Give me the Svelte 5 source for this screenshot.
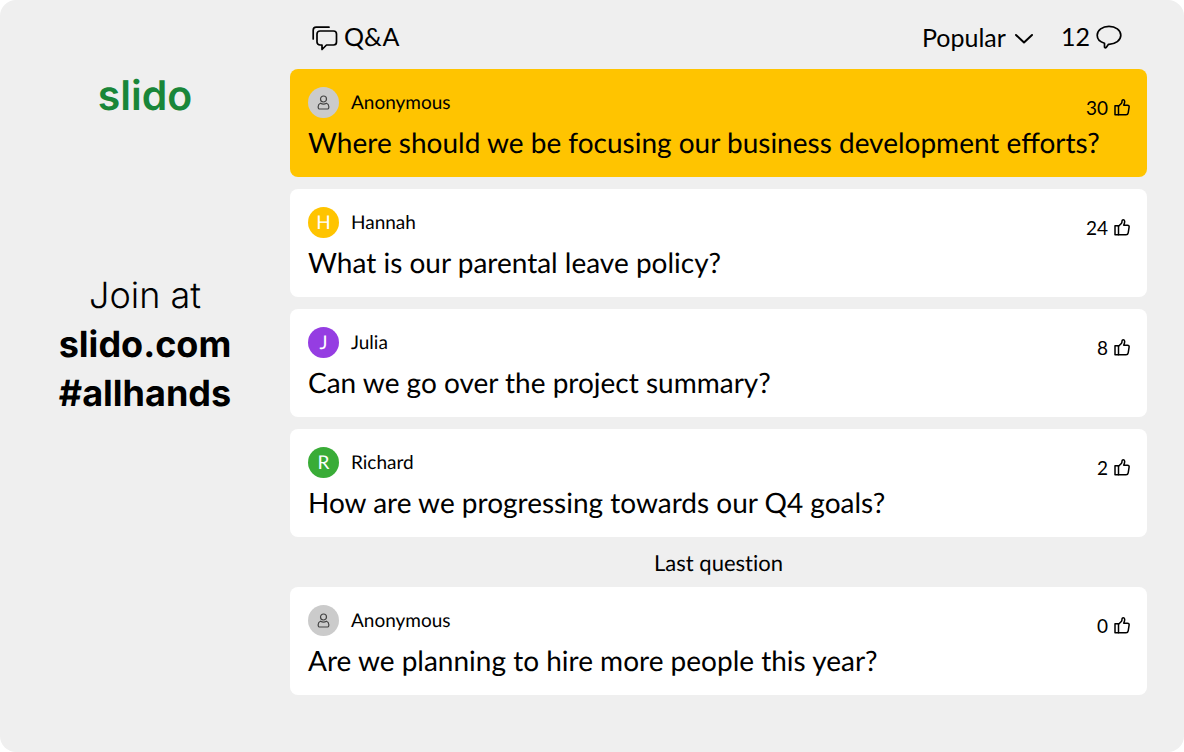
<script>
    let sort = 'popular';

    let questions = [
        {id: 1, author: 'Anonymous', text: 'Where should we be focusing our business development efforts?', votes: 30, highlighted: true},
        {id: 2, author: 'Hannah', initial: 'H', color: '#ffc400', text: 'What is our parental leave policy?', votes: 24},
        {id: 3, author: 'Julia', initial: 'J', color: '#953de2', text: 'Can we go over the project summary?', votes: 8},
        {id: 4, author: 'Richard', initial: 'R', color: '#39ac37', text: 'How are we progressing towards our Q4 goals?', votes: 2},
        {id: 5, author: 'Anonymous', text: 'Are we planning to hire more people this year?', votes: 0, last: true}
    ];

    function vote(question) {
        question.votes += 1;
        questions = questions;
    }
</script>

<div class="screen">
    <aside>
        <div class="logo">slido</div>
        <div class="join">
            <span>Join at</span>
            <strong>slido.com</strong>
            <strong>#allhands</strong>
        </div>
    </aside>

    <main>
        <header>
            <svg viewBox="0 0 26 28" width="26" height="28" aria-hidden="true">
                <path d="M1.2 16V7.200A3 3 0 0 1 4.200 4.200H17" />
                <path d="M8 8H21.500A3 3 0 0 1 24.500 11V19A3 3 0 0 1 21.500 22H14.500L10 26.500V22H8A3 3 0 0 1 5 19V11A3 3 0 0 1 8 8Z" />
            </svg>
            <h1>Q&amp;A</h1>
            <div class="sort">
                <select bind:value={sort} aria-label="Sort questions">
                    <option value="popular">Popular</option>
                    <option value="recent">Recent</option>
                </select>
                <svg viewBox="0 0 20 14" width="20" height="14" aria-hidden="true">
                    <path d="M2 5L10 12.500L18 5" />
                </svg>
            </div>
            <div class="count">
                <span>12</span>
                <svg viewBox="0 0 26 24" width="26" height="24" aria-hidden="true">
                    <path d="M8.500 18.300C4.200 17 1.200 14 1.200 10.300C1.200 5.300 6.500 1.300 13 1.300S24.800 5.300 24.800 10.300S19.500 19.300 13 19.300H12.500L10.200 22.400C9.500 23.200 8.500 22.800 8.500 21.900Z" />
                </svg>
            </div>
        </header>

        <div class="questions">
            {#each questions as question (question.id)}
                {#if question.last}
                    <p class="divider">Last question</p>
                {/if}
                <article class="question" class:highlighted={question.highlighted}>
                    <div class="author">
                        {#if question.initial}
                            <span class="avatar" style="background-color: {question.color}">{question.initial}</span>
                        {:else}
                            <span class="avatar">
                                <svg viewBox="0 0 13 15" width="13" height="15" aria-hidden="true">
                                    <circle cx="6.500" cy="4" r="3" />
                                    <path d="M3.500 8.200C2 8.800 1.200 9.900 1.200 11.500V12.500A1.500 1.500 0 0 0 2.700 14H10.300A1.500 1.500 0 0 0 11.800 12.500V11.500C11.800 9.900 11 8.800 9.500 8.200Q6.500 10 3.500 8.200Z" />
                                </svg>
                            </span>
                        {/if}
                        <span class="name">{question.author}</span>
                    </div>
                    <button class="vote" on:click={() => vote(question)}>
                        <span>{question.votes}</span>
                        <svg viewBox="0 0 16 18" width="16" height="18" aria-hidden="true">
                            <path d="M1 6.800H4.500V15.800H1Z" />
                            <path d="M4.500 7.300L7.300 4.500C8 3.800 8 3 8 2.200C8 0.200 10.700 0.300 10.700 2.500C10.700 3.800 10.300 5 9.700 6.200H13.500C14.700 6.200 15.300 7.100 15.100 8.200L14.200 13.900C14 15.100 13.200 15.800 12 15.800H4.500" />
                        </svg>
                    </button>
                    <p class="text">{question.text}</p>
                </article>
            {/each}
        </div>
    </main>
</div>

<style>
    :global(body) {
        background-color: #fff;
    }
    .screen {
        display: grid;
        grid-template-columns: 290px 1fr;
        min-height: 100vh;
        box-sizing: border-box;
        padding-right: 37px;
        border-radius: 16px;
        background-color: #efefef;
        color: #000;
        font-family: Lato, sans-serif;
        text-rendering: geometricPrecision;
    }
    aside {
        padding-top: 70px;
        text-align: center;
        font-family: Inter, sans-serif;
    }
    .logo {
        margin-bottom: 151px;
        color: #198639;
        font-size: 41px;
        font-weight: 600;
        line-height: 50px;
    }
    .join {
        display: flex;
        flex-direction: column;
        font-size: 36px;
        line-height: 49px;
    }
    .join span {
        font-weight: 300;
    }
    .join strong {
        font-weight: 700;
    }
    header {
        display: flex;
        align-items: center;
        height: 69px;
        padding: 5px 25px 0 22px;
        box-sizing: border-box;
        font-size: 25px;
    }
    svg {
        display: block;
        fill: none;
        stroke: currentColor;
        stroke-width: 1.7;
        stroke-linecap: round;
        stroke-linejoin: round;
    }
    h1 {
        margin: 0 auto 0 6px;
        font-size: 25px;
        font-weight: 400;
    }
    .sort {
        display: flex;
        align-items: center;
        gap: 8px;
        margin-right: 27px;
    }
    select {
        padding: 0;
        border: 0;
        background: none;
        appearance: none;
        color: inherit;
        font: inherit;
    }
    .sort svg {
        stroke-width: 2;
    }
    .count {
        display: flex;
        align-items: center;
        gap: 6px;
    }
    .questions {
        display: flex;
        flex-direction: column;
        gap: 12px;
    }
    .question {
        display: grid;
        grid-template-columns: 1fr auto;
        row-gap: 4px;
        padding: 18px 17px 15px 18px;
        border-radius: 8px;
        background-color: #fff;
    }
    .question.highlighted {
        background-color: #ffc400;
    }
    .author {
        display: flex;
        align-items: center;
        gap: 12px;
        font-size: 19px;
    }
    .avatar {
        display: flex;
        align-items: center;
        justify-content: center;
        width: 31px;
        height: 31px;
        border-radius: 50%;
        background-color: #cbcbcb;
        color: #fff;
    }
    .avatar svg {
        color: #444;
        stroke-width: 1.2;
    }
    .vote {
        display: flex;
        align-items: center;
        align-self: end;
        gap: 6px;
        padding: 0;
        border: 0;
        background: none;
        color: inherit;
        font-family: inherit;
        font-size: 19px;
        line-height: 20px;
        cursor: pointer;
    }
    .vote svg {
        stroke-width: 1.5;
    }
    .text {
        grid-column: 1 / -1;
        margin: 0;
        font-size: 28px;
        line-height: 40px;
    }
    .divider {
        margin: 0;
        padding-top: 2px;
        text-align: center;
        font-size: 22px;
        line-height: 24px;
        font-variant-ligatures: none;
    }
</style>
